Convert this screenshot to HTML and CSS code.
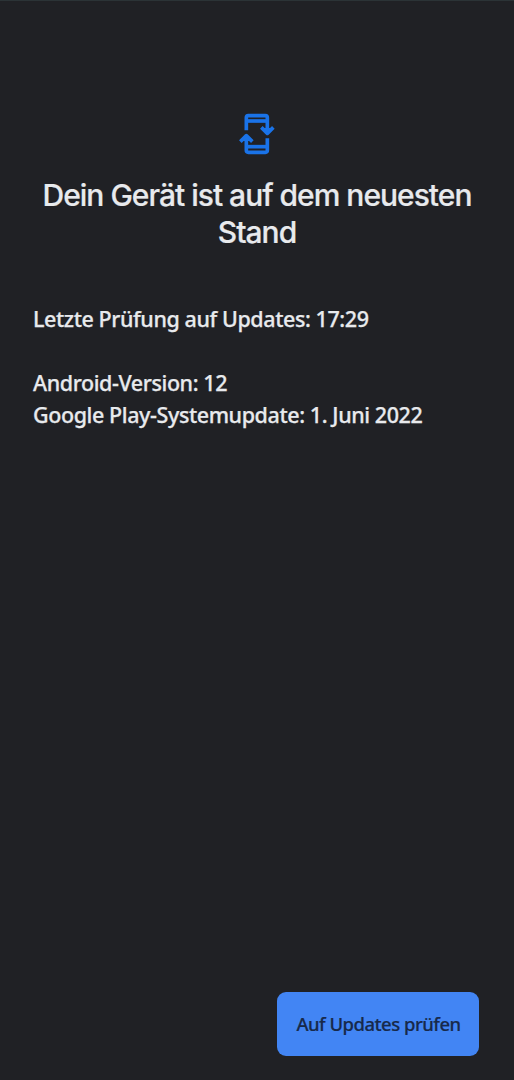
FILE: index.html
```html
<!DOCTYPE html>
<html lang="de">
<head>
<meta charset="utf-8">
<title>Systemupdate</title>
<link rel="stylesheet" href="styles.css">
</head>
<body>
<main class="screen">
  <svg class="icon" viewBox="0 0 150 162" aria-hidden="true">
    <g fill="none" stroke="currentColor" stroke-width="11" stroke-linejoin="round">
      <path d="M43 73V35Q43 29 49 29H100Q106 29 106 35V78"/>
      <path d="M43 45H106"/>
      <path d="M88 64L106 82L124 64"/>
      <path d="M106 97V133Q106 139 100 139H49Q43 139 43 133V92"/>
      <path d="M43 122H106"/>
      <path d="M25 107L43 89L61 107"/>
    </g>
    <path d="M90 66H122L106 82ZM27 105H59L43 89Z" fill="currentColor"/>
  </svg>
  <h1 class="title"><span class="title-line">Dein Gerät ist auf dem neuesten</span> <span class="title-line title-end">Stand</span></h1>
  <section class="details">
    <p class="row checked">Letzte Prüfung auf Updates: 17:29</p>
    <p class="row version">Android-Version: 12</p>
    <p class="row play">Google Play-Systemupdate: 1. Juni 2022</p>
  </section>
  <footer class="actions"><button class="check" type="button">Auf Updates prüfen</button></footer>
</main>
</body>
</html>
```
FILE: styles.css
```css
* { box-sizing: border-box; }
body { margin: 0; background: #202125; color: #e8eaed; }
.screen {
  display: flex; flex-direction: column;
  height: 1080px; padding: 105px 33px 24px;
  border-top: 1px solid #2b3336;
  font-family: "Noto Sans", sans-serif;
}
.icon { width: 50px; height: 54px; align-self: center; color: #1a73e8; flex: none; }
.title {
  margin: 17px -20px 0; text-align: center;
  font: 500 30px/37px Inter, sans-serif; letter-spacing: -1px;
  -webkit-text-stroke: 0.2px currentColor;
}
.title-line { display: block; white-space: nowrap; }
.details { margin-top: 52px; }
.row {
  margin: 0; font-size: 21.5px; font-weight: 500; line-height: 32px; white-space: nowrap; letter-spacing: -0.41px;
  -webkit-text-stroke: 0.25px currentColor;
}
.checked { margin-bottom: 32px; }
.actions { display: flex; justify-content: flex-end; margin-top: auto; padding-right: 2px; }
.check {
  width: 202px; height: 64px; padding: 0 0 2px 1px; border: 0; border-radius: 9px;
  background: #4285f4; color: #17294a;
  font: 500 18.5px "Noto Sans", sans-serif; letter-spacing: -0.52px; white-space: nowrap;
  -webkit-text-stroke: 0.2px currentColor;
}
```
